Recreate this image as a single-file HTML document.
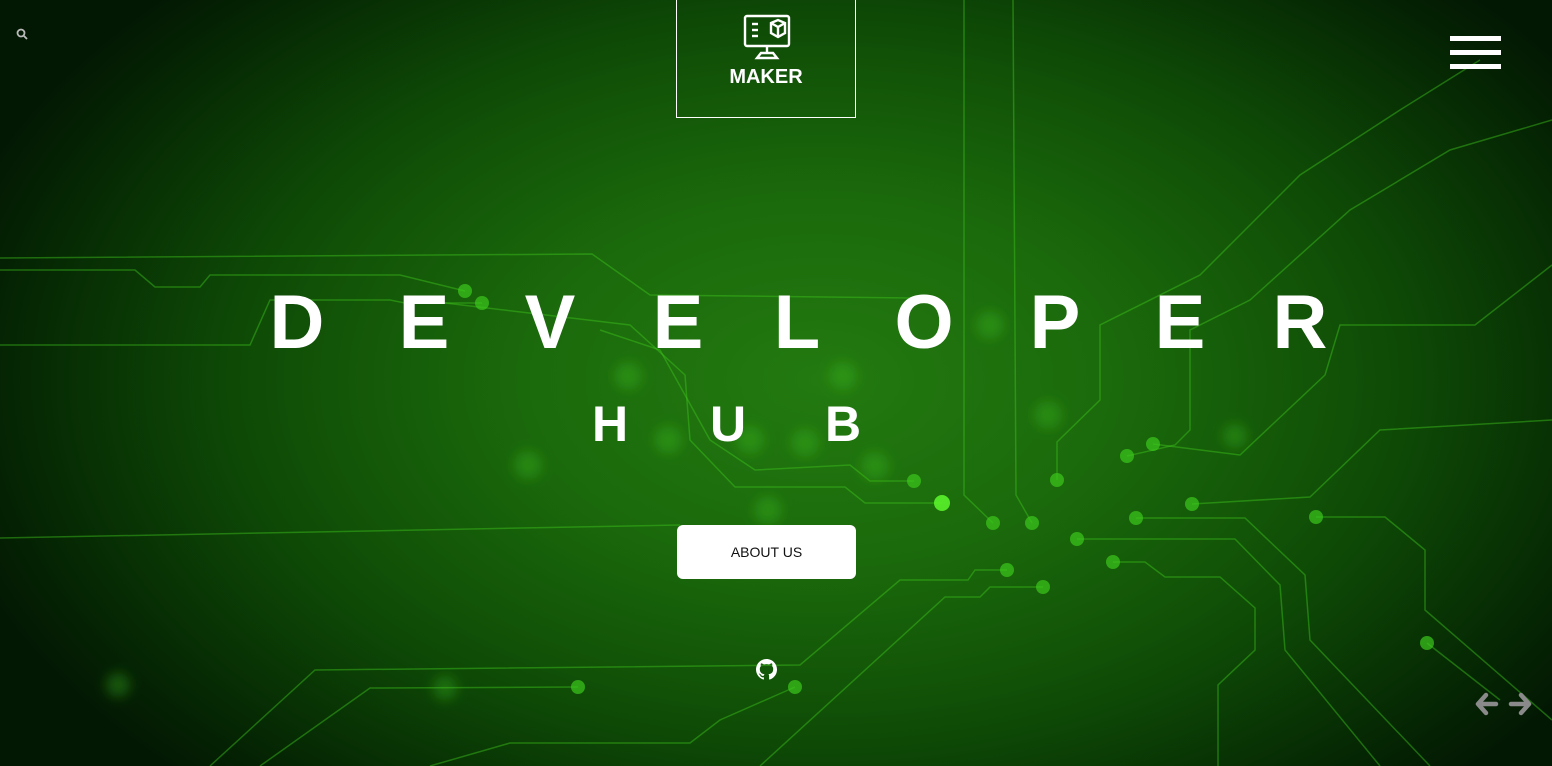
<!DOCTYPE html>
<html><head><meta charset="utf-8"><style>
*{margin:0;padding:0;box-sizing:border-box}
body{width:1552px;height:766px;overflow:hidden;position:relative;font-family:"Liberation Sans",sans-serif;
background:radial-gradient(ellipse 900px 560px at 820px 380px,#237a10 0%,#1a680b 35%,#0e4a06 65%,#052603 90%,#031803 100%);}
svg.bg{position:absolute;left:0;top:0}
.l{position:absolute;color:#fff;font-weight:bold;transform:translateX(-50%);line-height:1}
.big{font-size:76px;top:285px}
.sm{font-size:50px;top:399px}
.logo{position:absolute;left:676px;top:-2px;width:180px;height:120px;border:1px solid #fff}
.logo .t{position:absolute;top:67px;width:100%;text-align:center;color:#fff;font-weight:bold;font-size:20px}
.btn{position:absolute;left:677px;top:525px;width:179px;height:54px;background:#fff;border-radius:6px;color:#111;font-size:14px;text-align:center;line-height:54px}
.ham{position:absolute;left:1450px;width:51px;height:5px;background:#fff}
</style></head><body>
<svg class="bg" width="1552" height="766" fill="none" stroke="#3fc51c" stroke-width="1.5" stroke-opacity="0.45">
<defs><filter id="b"><feGaussianBlur stdDeviation="6"/></filter></defs>
<polyline points="0,258 592,254 650,295 912,298"/>
<polyline points="0,270 135,270 155,287 200,287 210,275 400,275 465,291"/>
<polyline points="0,345 250,345 270,300 390,300 405,303 482,303"/>
<polyline points="0,538 680,525"/>
<polyline points="420,300 630,325 685,375 690,440 735,487 845,487 865,503 942,503"/>
<polyline points="600,330 660,350 710,440 755,470 850,465 870,481 914,481"/>
<polyline points="964,0 964,495 993,523"/>
<polyline points="1013,0 1016,495 1032,523"/>
<polyline points="210,766 315,670 800,665 900,580 968,580 975,570 1007,570"/>
<polyline points="260,766 370,688 578,687"/>
<polyline points="430,766 510,743 690,743 720,720 795,687"/>
<polyline points="760,766 945,597 980,597 990,587 1043,587"/>
<polyline points="1057,480 1057,442 1100,400 1100,325 1200,275 1300,175 1400,110 1480,60"/>
<polyline points="1127,456 1175,445 1190,430 1190,330 1250,300 1350,210 1450,150 1552,120"/>
<polyline points="1153,444 1240,455 1325,375 1340,325 1475,325 1552,265"/>
<polyline points="1192,504 1310,497 1380,430 1552,420"/>
<polyline points="1136,518 1245,518 1305,575 1310,640 1430,766"/>
<polyline points="1077,539 1235,539 1280,585 1285,650 1380,766"/>
<polyline points="1113,562 1145,562 1165,577 1220,577 1255,608 1255,650 1218,685 1218,766"/>
<polyline points="1316,517 1385,517 1425,550 1425,610 1552,720"/>
<polyline points="1427,643 1500,700"/>
<g fill="#3cc81c" stroke="none" fill-opacity="0.7">
<circle cx="465" cy="291" r="7"/><circle cx="482" cy="303" r="7"/><circle cx="914" cy="481" r="7"/><circle cx="942" cy="503" r="8" fill="#5af22a" fill-opacity="0.9"/>
<circle cx="993" cy="523" r="7"/><circle cx="1032" cy="523" r="7"/><circle cx="1057" cy="480" r="7"/><circle cx="1127" cy="456" r="7"/><circle cx="1153" cy="444" r="7"/>
<circle cx="1192" cy="504" r="7"/><circle cx="1136" cy="518" r="7"/><circle cx="1077" cy="539" r="7"/><circle cx="1113" cy="562" r="7"/><circle cx="1007" cy="570" r="7"/>
<circle cx="1043" cy="587" r="7"/><circle cx="578" cy="687" r="7"/><circle cx="795" cy="687" r="7"/><circle cx="1316" cy="517" r="7"/><circle cx="1427" cy="643" r="7"/>
</g>
<g fill="#3ec41a" stroke="none" fill-opacity="0.35" filter="url(#b)">
<circle cx="628" cy="376" r="14"/><circle cx="843" cy="376" r="14"/><circle cx="528" cy="465" r="14"/><circle cx="750" cy="440" r="14"/><circle cx="805" cy="443" r="14"/>
<circle cx="990" cy="325" r="14"/><circle cx="1048" cy="415" r="14"/><circle cx="668" cy="440" r="14"/><circle cx="875" cy="466" r="14"/><circle cx="768" cy="510" r="14"/><circle cx="1235" cy="436" r="12"/><circle cx="118" cy="685" r="12"/><circle cx="445" cy="688" r="12"/>
</g>
</svg>
<svg style="position:absolute;left:16px;top:28px" width="12" height="12" viewBox="0 0 12 12" fill="none" stroke="#bbb" stroke-width="1.8"><circle cx="5" cy="5" r="3.5"/><line x1="7.5" y1="7.5" x2="11" y2="11"/></svg>
<div class="logo">
<svg style="position:absolute;left:66px;top:15px" width="48" height="46" viewBox="0 0 48 46" fill="none" stroke="#fff" stroke-width="2.4">
<rect x="2" y="2" width="44" height="30" rx="2"/><line x1="9" y1="10" x2="15" y2="10"/><line x1="9" y1="16" x2="15" y2="16"/><line x1="9" y1="22" x2="15" y2="22"/>
<path d="M28 9 L35 6 L42 9 L42 19 L35 23 L28 19 Z M28 9 L35 13 L42 9 M35 13 L35 23"/>
<line x1="24" y1="32" x2="24" y2="40"/><path d="M14 44 L18 39 L30 39 L34 44 Z"/></svg>
<div class="t">MAKER</div></div>
<div class="ham" style="top:36px"></div><div class="ham" style="top:50px"></div><div class="ham" style="top:64px"></div>
<div class="l big" style="left:297px">D</div><div class="l big" style="left:424px">E</div><div class="l big" style="left:550px">V</div>
<div class="l big" style="left:678px">E</div><div class="l big" style="left:797px">L</div><div class="l big" style="left:924px">O</div>
<div class="l big" style="left:1055px">P</div><div class="l big" style="left:1180px">E</div><div class="l big" style="left:1300px">R</div>
<div class="l sm" style="left:610px">H</div><div class="l sm" style="left:728px">U</div><div class="l sm" style="left:843px">B</div>
<div class="btn">ABOUT US</div>
<svg style="position:absolute;left:756px;top:659px" width="21" height="21" viewBox="0 0 16 16"><path fill="#fff" d="M8 0C3.58 0 0 3.58 0 8c0 3.540 2.29 6.53 5.47 7.59.4.07.55-.17.55-.38v-1.34c-2.230.48-2.7-1.07-2.7-1.07-.36-.92-.89-1.17-.89-1.17-.73-.5.06-.49.06-.49.8.06 1.23.83 1.23.83.72 1.22 1.87.87 2.33.67.07-.52.28-.87.51-1.07-1.78-.2-3.65-.89-3.65-3.950 0-.87.31-1.59.82-2.15-.08-.2-.36-1.02.08-2.12 0 0 .67-.21 2.2.82a7.6 7.6 0 0 1 4 0c1.53-1.04 2.2-.82 2.2-.82.44 1.1.16 1.92.08 2.12.51.56.82 1.27.82 2.15 0 3.07-1.87 3.75-3.65 3.95.29.25.54.73.54 1.48v2.2c0 .21.15.46.55.38A8 8 0 0 0 16 8c0-4.42-3.58-8-8-8z"/></svg>
<svg style="position:absolute;left:1474px;top:690px" width="62" height="28" viewBox="0 0 62 28" fill="none" stroke="#8a8a8a" stroke-width="4.5" stroke-linecap="round" stroke-linejoin="round">
<path d="M22 14 H4 M12 5 L4 14 L12 23"/><path d="M37 14 H55 M47 5 L55 14 L47 23"/></svg>
</body></html>
